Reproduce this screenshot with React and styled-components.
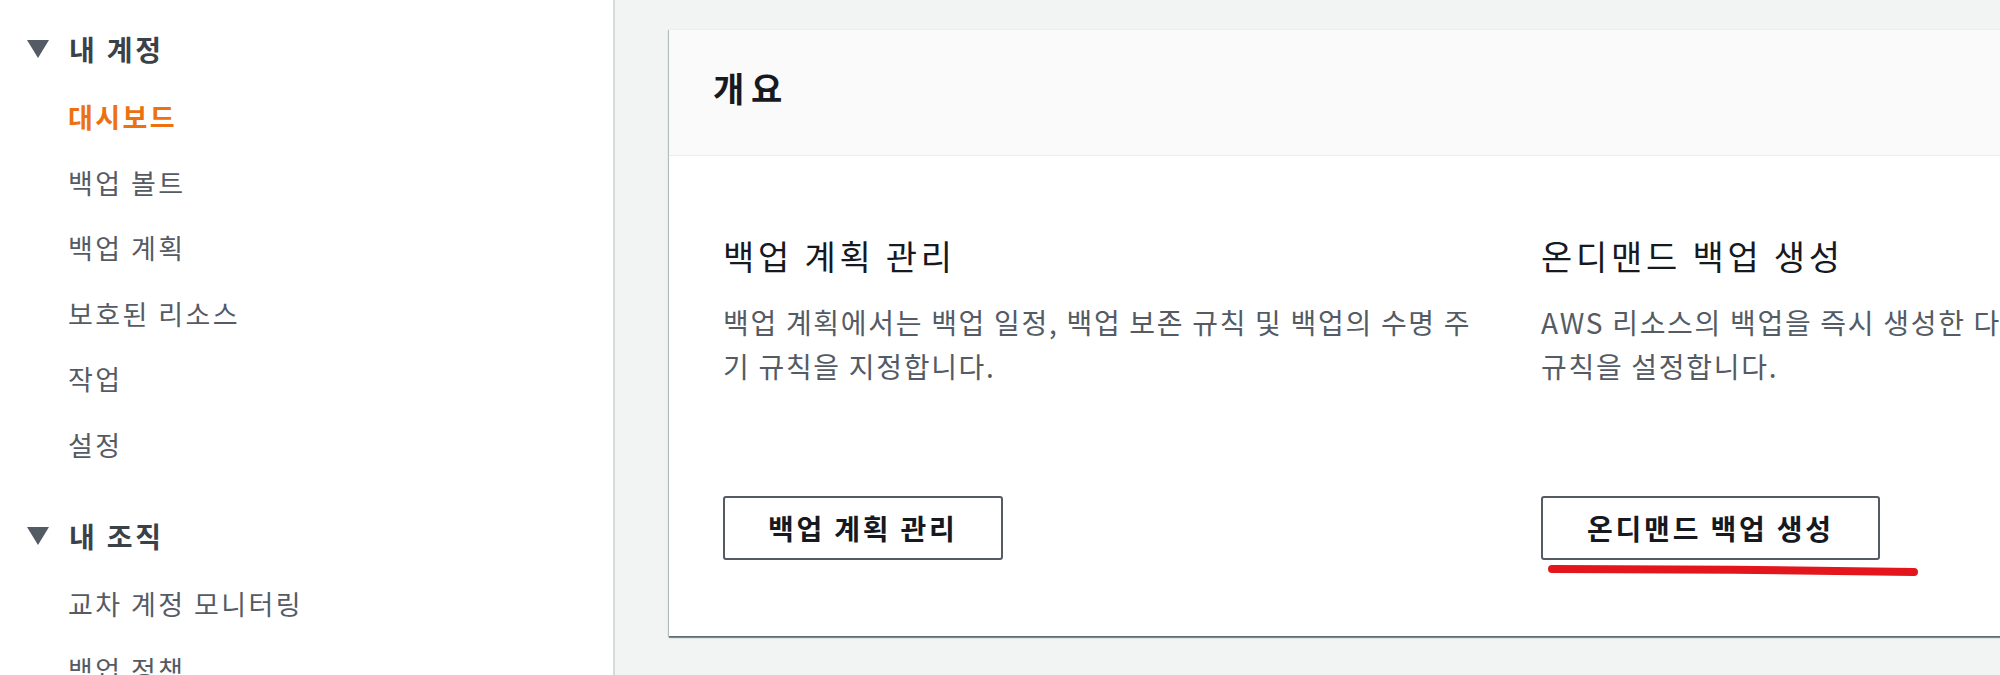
import React from "react"
import styled, { createGlobalStyle } from "styled-components"

const GlobalStyle = createGlobalStyle`
  html, body {
    margin: 0;
    padding: 0;
    height: 675px;
    overflow: hidden;
    background: #f2f3f3;
  }
  body {
    font-family: "Noto Sans CJK KR", "Noto Sans", sans-serif;
  }
`

const Layout = styled.div`
  display: flex;
  width: 2000px;
  height: 675px;
  overflow: hidden;
`

const Sidebar = styled.nav`
  flex: 0 0 615px;
  box-sizing: border-box;
  background: #ffffff;
  border-right: 2px solid #d5dbdb;
  padding: 29px 0 0 27px;
`

const Section = styled.div`
  margin-bottom: 39px;
`

const SectionHeading = styled.div`
  display: flex;
  align-items: center;
  gap: 20px;
  height: 40px;
  font-size: 28px;
  font-weight: 700;
  letter-spacing: 0.1em;
  color: #3b4149;
`

const Caret = styled.span`
  width: 0;
  height: 0;
  border-left: 11px solid transparent;
  border-right: 11px solid transparent;
  border-top: 18px solid #545b64;
`

const NavList = styled.ul`
  list-style: none;
  margin: 15px 0 0;
  padding: 0 0 0 41px;
`

const NavItem = styled.li`
  height: 65.5px;
  display: flex;
  align-items: center;
  font-size: 27px;
  letter-spacing: 0.09em;
  font-weight: ${(p) => (p.$active ? 700 : 400)};
  color: ${(p) => (p.$active ? "#ec7211" : "#545b64")};
  white-space: nowrap;
`

const Main = styled.main`
  flex: 1;
  padding: 29px 0 0 54px;
  overflow: hidden;
`

const Card = styled.section`
  width: 2600px;
  background: #ffffff;
  border-top: 1px solid #eaeded;
  box-shadow: 0 2px 1px 0 rgba(0, 28, 36, 0.45), 1px 1px 1px 0 rgba(0, 28, 36, 0.15),
    -1px 1px 1px 0 rgba(0, 28, 36, 0.2);
`

const CardHeader = styled.header`
  height: 126px;
  box-sizing: border-box;
  display: flex;
  align-items: center;
  padding: 0 0 10px 44px;
  background: #fafafa;
  border-bottom: 1px solid #eaeded;
`

const CardTitle = styled.h2`
  margin: 0;
  font-size: 34px;
  font-weight: 700;
  letter-spacing: 0.2em;
  color: #16191f;
`

const CardBody = styled.div`
  display: grid;
  grid-template-columns: repeat(3, 762px);
  column-gap: 56px;
  padding: 78px 0 76px 54px;
`

const Column = styled.div`
  display: flex;
  flex-direction: column;
  align-items: flex-start;
`

const ColumnTitle = styled.h3`
  margin: 0;
  font-size: 34px;
  line-height: 44px;
  font-weight: 400;
  letter-spacing: 0.11em;
  color: #16191f;
  white-space: nowrap;
`

const Description = styled.p`
  margin: 22px 0 0;
  font-size: 28px;
  line-height: 44px;
  letter-spacing: 1.7px;
  color: #545b64;
`

const ButtonWrap = styled.div`
  position: relative;
  margin-top: 108px;
`

const Button = styled.button`
  height: 64px;
  box-sizing: border-box;
  padding: 0 ${(p) => p.$pad}px;
  border: 2px solid #545b64;
  border-radius: 3px;
  background: #ffffff;
  font-family: inherit;
  font-size: 28px;
  font-weight: 700;
  letter-spacing: 0.1em;
  color: #16191f;
  white-space: nowrap;
`

const Annotation = styled.svg`
  position: absolute;
  left: 7px;
  top: 69px;
  overflow: visible;
`

const navSections = [
  {
    title: "내 계정",
    items: ["대시보드", "백업 볼트", "백업 계획", "보호된 리소스", "작업", "설정"],
  },
  {
    title: "내 조직",
    items: ["교차 계정 모니터링", "백업 정책"],
  },
]

const columns = [
  {
    title: "백업 계획 관리",
    text: "백업 계획에서는 백업 일정, 백업 보존 규칙 및 백업의 수명 주기 규칙을 지정합니다.",
    button: "백업 계획 관리",
    pad: 43,
  },
  {
    title: "온디맨드 백업 생성",
    text: "AWS 리소스의 백업을 즉시 생성한 다음 백업본의 수명 주기 규칙을 설정합니다.",
    button: "온디맨드 백업 생성",
    pad: 44,
    marked: true,
  },
  {
    title: "백업 볼트 관리",
    text: "백업 볼트는 백업을 저장하고 구성하는 컨테이너입니다.",
    button: "백업 볼트 관리",
    pad: 44,
  },
]

export default function App() {
  return (
    <>
      <GlobalStyle />
      <Layout>
        <Sidebar>
          {navSections.map((section) => (
            <Section key={section.title}>
              <SectionHeading>
                <Caret />
                {section.title}
              </SectionHeading>
              <NavList>
                {section.items.map((item) => (
                  <NavItem key={item} $active={item === "대시보드"}>
                    {item}
                  </NavItem>
                ))}
              </NavList>
            </Section>
          ))}
        </Sidebar>
        <Main>
          <Card>
            <CardHeader>
              <CardTitle>개요</CardTitle>
            </CardHeader>
            <CardBody>
              {columns.map((col) => (
                <Column key={col.title}>
                  <ColumnTitle>{col.title}</ColumnTitle>
                  <Description>{col.text}</Description>
                  <ButtonWrap>
                    <Button $pad={col.pad}>{col.button}</Button>
                    {col.marked && (
                      <Annotation width="370" height="12" viewBox="0 0 370 12">
                        <path
                          d="M4 4 C 120 4, 250 5, 366 7"
                          stroke="#e3161b"
                          strokeWidth="8"
                          strokeLinecap="round"
                          fill="none"
                        />
                      </Annotation>
                    )}
                  </ButtonWrap>
                </Column>
              ))}
            </CardBody>
          </Card>
        </Main>
      </Layout>
    </>
  )
}
